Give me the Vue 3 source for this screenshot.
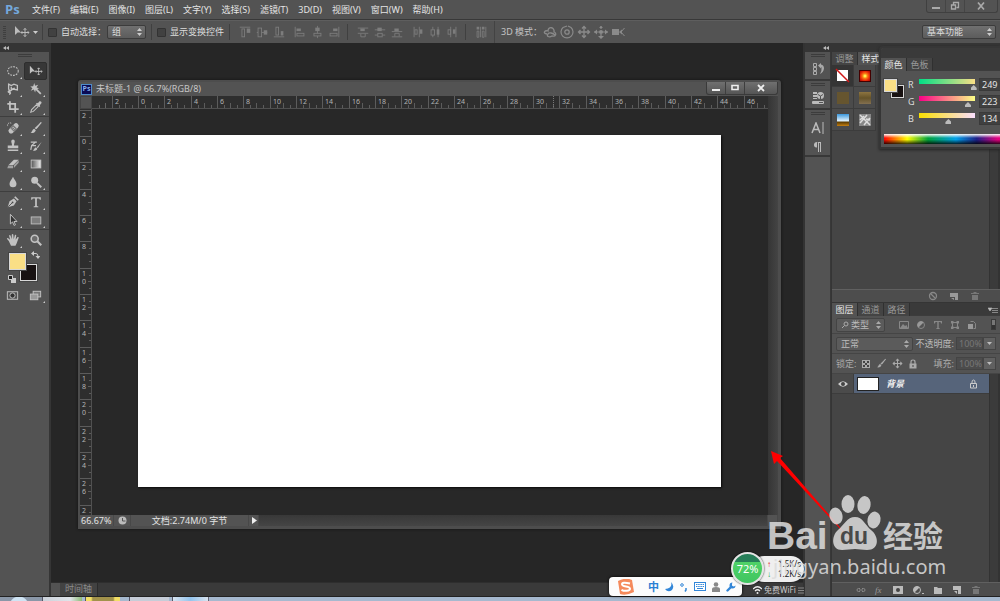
<script setup>
import { ref } from 'vue'

const menus = ['文件(F)', '编辑(E)', '图像(I)', '图层(L)', '文字(Y)', '选择(S)', '滤镜(T)', '3D(D)', '视图(V)', '窗口(W)', '帮助(H)']

const icons = {
  move: '<path d="M1 2v9l2.600-2.400H7z" fill="currentColor"/><path d="M11 4.500v8M7 8.500h8M9.700 5.800L11 4.400l1.300 1.400M9.700 11.200L11 12.600l1.300-1.400M8.300 7.200L7 8.500l1.300 1.300M13.700 7.200L15 8.500l-1.300 1.300" fill="none" stroke="currentColor"/>',
  ellipse: '<ellipse cx="8" cy="8" rx="6" ry="5" fill="none" stroke="currentColor" stroke-width="1.200" stroke-dasharray="2 1.200"/>',
  lasso: '<path d="M3 2.500l3 1.500 3-1.500 4 1.500v5L8 8 4.500 10.500 3 8zM4.500 10.500C2 10 2 12 4 12s1 2-.5 2M6 5.500v3l4-1.500" fill="none" stroke="currentColor" stroke-width="1.500"/>',
  wand: '<path d="M7 7l6.500 6.500" stroke="currentColor" stroke-width="2"/><path d="M6 1l1 3.200L10.500 3 8.600 6l2.900 1.800-3.500.2L7 12 5.500 8.700 2 10l1.900-3L1.500 5l3.300-.2z" fill="currentColor"/>',
  crop: '<path d="M4.500 1.500v9h10M1.500 4.500h9v10" fill="none" stroke="currentColor" stroke-width="2"/>',
  dropper: '<path d="M2 14l1-3 5.500-5.500 2 2L5 13z" fill="none" stroke="currentColor" stroke-width="1.200"/><path d="M8 4l1.200-1 1 .6 1.500-1.800c1.500-1.200 3.500.5 2.300 2.200L12.300 6l.5 1-1 1z" fill="currentColor"/>',
  heal: '<g transform="rotate(-45 9 8)"><rect x="1.500" y="5" width="14" height="6" rx="3" fill="currentColor"/><rect x="6" y="5" width="5" height="6" fill="#777"/><path d="M7.500 7h2M7.500 9h2" stroke="#ddd"/></g><path d="M6 2.500C3 1 1 3.500 2 6.500" fill="none" stroke="currentColor" stroke-dasharray="1.500 1"/>',
  brush: '<path d="M14.500 1L8 9.500 6.500 8z" fill="currentColor"/><path d="M14 1.500L8 8.800" stroke="currentColor" stroke-width="1.500"/><path d="M6 8.800l1.800 1.700C7 13.500 4 14 1.500 13.500 4 12.500 3.500 9.500 6 8.800z" fill="currentColor"/>',
  stamp: '<path d="M6 2.500a2 2 0 0 1 4 0c0 2-1 2.500-.8 5H14v3H2v-3h4.800c.2-2.500-.8-3-.8-5zM2 12h12v1.800H2z" fill="currentColor"/>',
  history: '<path d="M14.500 3L9 9.500l1 1zM8 9.500l1.500 1.500c-.5 2-3 2.800-5 2.300 1.500-1 1.500-3 3.500-3.800z" fill="currentColor"/><path d="M2 3.500h7M3 7.500h5M8 3L3 7.500l-1 5" fill="none" stroke="currentColor" stroke-width="1.400"/>',
  eraser: '<path d="M9 3h5.500L8.500 9H3z" fill="currentColor"/><path d="M2.500 9.800H8v3H1.500zM9 9.500l5.500-5.800v3L9 12.500z" fill="currentColor" opacity=".7"/>',
  gradient: '<defs><linearGradient id="toolGrad"><stop stop-color="#555"/><stop offset="1" stop-color="#eee"/></linearGradient></defs><rect x="2.500" y="3.500" width="11" height="9" fill="url(#toolGrad)" stroke="currentColor"/>',
  drop: '<path d="M8 2c1 3 4 5 4 8a4 4 0 0 1-8 0c0-3 3-5 4-8z" fill="currentColor"/>',
  dodge: '<circle cx="6.500" cy="6" r="4" fill="currentColor"/><path d="M9 9l5 5" stroke="currentColor" stroke-width="2.200"/>',
  pen: '<path d="M2 14l2-7 5-3 3 3-3 5z" fill="currentColor"/><path d="M10 2l4 4" stroke="currentColor" stroke-width="2"/><path d="M2.500 13.500L7 9" stroke="#484848"/><circle cx="7.500" cy="8.500" r="1" fill="#484848"/>',
  type: '<path d="M2.500 2.500h11v3h-1l-.8-1.500H9v8.500l1.700.5v1H5.300v-1L7 12.500V4H4.300l-.8 1.500h-1z" fill="currentColor"/>',
  path: '<path d="M5 1.500v11l2.500-2.300 1.700 4 1.600-.7-1.700-3.800h3.400z" fill="#333" stroke="currentColor" stroke-width="1.100"/>',
  rect: '<rect x="2.500" y="4.500" width="11" height="8" fill="#7d7d7d" stroke="currentColor"/>',
  hand: '<path d="M3.200 9L1 6.500c.5-1 1.500-.8 2.200 0l1.500 1.300L3.500 3c.2-1.200 1.500-1 1.800 0l1.200 4L6.600 2c.3-1 1.600-1 1.800 0l.4 5 1.300-4.500c.5-1 1.600-.6 1.600.4L11 7.700l2-2.800c.8-.7 1.800 0 1.300 1l-2.200 6-1.300 2.600H5.700z" fill="currentColor"/>',
  zoom: '<circle cx="6.500" cy="6.500" r="4" fill="#6c6c6c" stroke="currentColor" stroke-width="1.800"/><path d="M9.500 9.500l4.500 4.500" stroke="currentColor" stroke-width="2.400"/>',
  mask: '<rect x="2.500" y="4" width="11" height="8" fill="none" stroke="currentColor"/><circle cx="8" cy="8" r="2.800" fill="#333" stroke="currentColor"/>',
  screen: '<rect x="5.500" y="3.500" width="8" height="6" fill="#777" stroke="currentColor"/><rect x="2.500" y="6.500" width="8" height="6" fill="#999" stroke="currentColor"/>',
  alT: '<path d="M1 1.500h12" stroke="currentColor"/><rect x="3.500" y="3.500" width="3" height="9" fill="none" stroke="currentColor"/><path d="M9 3h4v5H9z" fill="currentColor"/>',
  alM: '<path d="M1 7.500h12" stroke="currentColor"/><rect x="2.500" y="2.500" width="4" height="10" fill="#535353" stroke="currentColor"/><path d="M9 5h4v5H9z" fill="currentColor"/>',
  alB: '<path d="M1 12.500h12" stroke="currentColor"/><rect x="3.500" y="1.500" width="3" height="9" fill="none" stroke="currentColor"/><path d="M9 6h3v5H9z" fill="currentColor"/>',
  alL: '<path d="M1.500 1v12" stroke="currentColor"/><path d="M3 3h5v3H3z" fill="currentColor"/><rect x="3.500" y="8.500" width="8" height="3" fill="none" stroke="currentColor"/>',
  alC: '<path d="M7.500 0v14" stroke="currentColor"/><path d="M5 2h5v4H5z" fill="currentColor"/><rect x="3.500" y="8.500" width="8" height="3" fill="#535353" stroke="currentColor"/>',
  alR: '<path d="M12.500 1v12" stroke="currentColor"/><path d="M6 3h5v3H6z" fill="currentColor"/><rect x="2.500" y="8.500" width="8" height="3" fill="none" stroke="currentColor"/>',
  dsT: '<path d="M1 2.500h12M1 8.500h12" stroke="currentColor"/><path d="M4 3h5v3H4z" fill="currentColor"/><path d="M4.500 9v3.500h5V9" fill="none" stroke="currentColor"/>',
  dsM: '<path d="M1 4.500h12M1 10.500h12" stroke="currentColor"/><path d="M4 2h5v4H4z" fill="currentColor"/><rect x="4.500" y="8.500" width="5" height="4" fill="#535353" stroke="currentColor"/>',
  dsB: '<path d="M1 6.500h12M1 12.500h12" stroke="currentColor"/><path d="M4 3h5v3H4z" fill="currentColor"/><path d="M4.500 12V8.500h5V12" fill="none" stroke="currentColor"/>',
  dsL: '<path d="M2.500 1v12M8.500 1v12" stroke="currentColor"/><rect x="3.500" y="4.500" width="2.500" height="5" fill="none" stroke="currentColor"/><path d="M9 4h3v5H9z" fill="currentColor"/>',
  dsC: '<path d="M4.500 1v12M10.500 1v12" stroke="currentColor"/><rect x="2.500" y="4.500" width="4" height="6" fill="#535353" stroke="currentColor"/><path d="M9 4h3v6H9z" fill="currentColor"/>',
  dsR: '<path d="M5.500 1v12M11.500 1v12" stroke="currentColor"/><rect x="2.500" y="4.500" width="3" height="5" fill="none" stroke="currentColor"/><path d="M8 4h3v5H8z" fill="currentColor"/>',
  auto: '<path d="M2 1h3v3H2zM8 1h3v3H8z" fill="currentColor"/><path d="M2.500 6v7h2V6zM8.500 6v7h2V6zM6.500 1v12M12.500 1v12" fill="none" stroke="currentColor"/>',
  orbit: '<path d="M4 9C-1 8 2 5 5 6c0-5 7-4 6 1 3 1 2 5-2 4-3 2-6 0-4-2 1-2 5-1 7 1" fill="none" stroke="currentColor" stroke-width="1.300"/>',
  roll: '<circle cx="7" cy="7" r="2.200" fill="none" stroke="currentColor" stroke-width="1.300"/><path d="M3 2.500A6 6 0 1 0 11 2.500L8 1M3 2.500L7 1" fill="none" stroke="currentColor" stroke-width="1.200"/>',
  pan: '<path d="M7 1.500v11M1.500 7h11M5 3.500l2-2 2 2M5 10.500l2 2 2-2M3.500 5l-2 2 2 2M10.500 5l2 2-2 2" fill="none" stroke="currentColor" stroke-width="1.300"/>',
  slide: '<circle cx="7" cy="7" r="2" fill="currentColor"/><path d="M7 1v3M0 7h14M7 9v4" stroke="currentColor" stroke-width="1.200"/><path d="M5 3l2-2 2 2zM4 11l3 3 3-3zM3 4.500v5L0 7zM11 4.500v5L14 7z" fill="currentColor"/>',
  camera: '<path d="M1 4h7v6H1zM8 7l3-2.500v5z" fill="currentColor"/><path d="M13.500 3L10 7l3.500 4" fill="none" stroke="currentColor"/>'
}

const toolGroups = [
  [['ellipse', '椭圆选框'], ['move', '移动'], ['lasso', '套索'], ['wand', '魔棒'], ['crop', '裁剪'], ['dropper', '吸管']],
  [['heal', '修复画笔'], ['brush', '画笔'], ['stamp', '仿制图章'], ['history', '历史记录画笔'], ['eraser', '橡皮擦'], ['gradient', '渐变'], ['drop', '模糊'], ['dodge', '减淡']],
  [['pen', '钢笔'], ['type', '文字'], ['path', '路径选择'], ['rect', '矩形']],
  [['hand', '抓手'], ['zoom', '缩放']]
]
const activeTool = ref('move')

const alignGroups = [
  [['alT', 'alM', 'alB'], ['alL', 'alC', 'alR']],
  [['dsT', 'dsM', 'dsB'], ['dsL', 'dsC', 'dsR']],
  [['auto']]
]
const modes3d = ['orbit', 'roll', 'pan', 'slide', 'camera']

// distance in pixels between two numbered ruler marks
const pitch = 26.33
const hMarks = Array.from({ length: 25 }, (_, i) => ({ x: Math.round(46 + (i - 1) * pitch), label: Math.abs((i - 1) * 2) }))
const vMarks = Array.from({ length: 16 }, (_, i) => ({ y: Math.round(27 + (i - 1) * pitch), label: String(Math.abs((i - 1) * 2)).split('') }))

const channels = ref([
  { name: 'R', value: 249, cls: 'r' },
  { name: 'G', value: 223, cls: 'g' },
  { name: 'B', value: 134, cls: 'b' }
])
</script>

<template>
  <div class="app">
    <header class="menubar">
      <span class="logo">Ps</span>
      <nav><a v-for="m in menus" :key="m" href="#">{{ m }}</a></nav>
      <div class="winbtns">
        <button aria-label="最小化"><svg width="10" height="10"><path d="M1 6h8v2H1z" fill="#aaa" /></svg></button>
        <button aria-label="还原"><svg width="10" height="10" fill="none" stroke="#aaa" stroke-width="1.300"><path d="M1.500 4h4v4h-4zM3.500 3.500v-2h5v5h-2" /></svg></button>
        <button class="wide" aria-label="关闭"><svg width="10" height="10"><path d="M2 1.500l6 7M8 1.500l-6 7" stroke="#aaa" stroke-width="1.700" /></svg></button>
      </div>
    </header>

    <div class="options">
      <i class="dots"></i>
      <svg class="mv" width="16" height="16" v-html="icons.move" />
      <svg class="car" width="5" height="3"><path d="M0 0h5L2.500 3z" fill="#ccc" /></svg>
      <i class="sep"></i>
      <label class="chk"><input type="checkbox">自动选择：</label>
      <div class="sel group"><select aria-label="自动选择"><option>组</option></select><svg width="5" height="8"><path d="M0 3l2.500-3L5 3zM0 5h5L2.500 8z" fill="#ccc" /></svg></div>
      <i class="sep"></i>
      <label class="chk second"><input type="checkbox">显示变换控件</label>
      <template v-for="(g, gi) in alignGroups" :key="gi">
        <i class="sep"></i>
        <div class="aligns">
          <div v-for="(s, si) in g" :key="si" class="set">
            <svg v-for="n in s" :key="n" width="14" height="14" viewBox="-1 -1 16 16" v-html="icons[n]" />
          </div>
        </div>
      </template>
      <i class="sep light"></i>
      <span class="mode">3D 模式：</span>
      <div class="set modes"><svg v-for="n in modes3d" :key="n" width="14" height="14" v-html="icons[n]" /></div>
      <div class="sel workspace-sel"><select aria-label="工作区"><option>基本功能</option></select><svg width="5" height="8"><path d="M0 3l2.500-3L5 3zM0 5h5L2.500 8z" fill="#ccc" /></svg></div>
    </div>

    <main class="work">
      <aside class="tools">
        <div class="strip"><svg width="6" height="4"><path d="M0 2l3-2v4zM3 2l3-2v4z" fill="#bbb" /></svg></div>
        <i class="grip"></i>
        <div v-for="(g, gi) in toolGroups" :key="gi" class="tgroup" :class="{ first: gi === 0, plain: gi === 3 }">
          <button v-for="[n, t] in g" :key="n" :aria-label="t" :class="{ on: activeTool === n, more: n !== 'zoom' && n !== 'move' }" @click="activeTool = n">
            <svg width="14" height="14" viewBox="0 0 16 16" v-html="icons[n]" />
          </button>
        </div>
        <div class="swatches">
          <span class="bg"></span><span class="fg"></span>
          <svg class="swap" width="9" height="8"><path d="M2 2.500h3q2 0 2 3" fill="none" stroke="#ccc" /><path d="M3 0v5L0 2.500zM4.500 5h5L7 8z" fill="#ccc" /></svg>
          <svg class="reset" width="8" height="8"><path d="M3 3h5v5H3z" fill="#ccc" /><path d="M.5.500h4v4h-4z" fill="#222" stroke="#ccc" /></svg>
        </div>
        <div class="tgroup plain">
          <button aria-label="快速蒙版"><svg width="15" height="15" viewBox="0 0 16 16" v-html="icons.mask" /></button>
          <button aria-label="屏幕模式" class="more"><svg width="15" height="15" viewBox="0 0 16 16" v-html="icons.screen" /></button>
        </div>
      </aside>

      <section class="center">
        <div class="stage">
          <article class="doc">
            <header class="dochead">
              <span class="pslogo">Ps</span>
              <h1>未标题-1 @ 66.7%(RGB/8)</h1>
              <div class="docbtns">
                <button aria-label="最小化文档"><svg width="10" height="8"><path d="M1 5h8v2H1z" fill="#eee" /></svg></button>
                <button aria-label="最大化文档"><svg width="10" height="8"><path d="M2 1.500h6v4H2z" fill="none" stroke="#eee" stroke-width="1.600" /></svg></button>
                <button class="wide" aria-label="关闭文档"><svg width="10" height="8"><path d="M2 1l6 6M8 1L2 7" stroke="#eee" stroke-width="1.800" /></svg></button>
              </div>
            </header>
            <div class="docbody">
              <div class="corner"></div>
              <div class="hruler">
                <svg width="100%" height="13">
                  <path d="M7.500 9v3M13.500 7v5" stroke="#666" />
                  <g v-for="m in hMarks" :key="m.x">
                    <path :d="`M${m.x + 0.5} 0v12M${m.x + 7.5} 9v3M${m.x + 13.5} 7v5M${m.x + 20.5} 9v3`" stroke="#5c5c5c" />
                    <text :x="m.x + 3" y="8">{{ m.label }}</text>
                  </g>
                  <path d="M461.500 0v12" stroke="#777" stroke-dasharray="1 1" />
                </svg>
              </div>
              <div class="vruler">
                <svg width="12" height="100%">
                  <g v-for="m in vMarks" :key="m.y">
                    <path :d="`M0 ${m.y + 0.5}h12M9 ${m.y + 7.5}h3M8 ${m.y + 13.5}h4M9 ${m.y + 20.5}h3`" stroke="#5c5c5c" />
                    <text v-for="(c, ci) in m.label" :key="ci" x="2" :y="m.y + 8 + ci * 8">{{ c }}</text>
                  </g>
                </svg>
              </div>
              <div class="canvaswrap"><div class="canvas"></div></div>
              <div class="vscroll"></div>
            </div>
            <footer class="docfoot">
              <span class="pct">66.67%</span>
              <span class="clock"><svg width="9" height="9"><circle cx="4.500" cy="4.500" r="4" fill="#bbb" /><path d="M4.500 2v3h3" stroke="#555" fill="none" /></svg></span>
              <span class="info">文档:2.74M/0 字节</span>
              <button class="play" aria-label="状态菜单"><svg width="6" height="7"><path d="M1 0v7l5-3.500z" fill="#eee" /></svg></button>
              <span class="rest"></span>
              <span class="size"></span>
            </footer>
          </article>
        </div>
        <div class="timeline"><i></i><span>时间轴</span></div>
      </section>

      <section class="right">
        <div class="strip rs">
          <svg width="6" height="4"><path d="M0 2l3-2v4zM3 2l3-2v4z" fill="#bbb" /></svg>
          <svg width="6" height="4"><path d="M0 0l3 2-3 2zM3 0l3 2-3 2z" fill="#bbb" /></svg>
        </div>
        <div class="rcols">
          <aside class="dock">
            <div class="dg"><i class="grip"></i>
              <svg width="14" height="14"><path d="M2.500 1.500h3v3h-3zM2.500 5.500h3v3h-3zM2.500 9.500h3v3h-3z" fill="none" stroke="#aaa" /><path d="M7 3.500L10 1v1.500q3 .5 3 4Q12.500 10 9 12q2-3 1.500-6.500L10 5v1.500z" fill="#aaa" /></svg>
            </div>
            <div class="dg"><i class="grip"></i>
              <svg width="14" height="14"><path d="M2 1h4v2H2zM2 4h4v2H2zM2 7h4v1H2z" fill="#bbb" /><circle cx="9.500" cy="4.500" r="3.500" fill="#bbb" /><path d="M7 3.500l2.500 1.500L12 3.500M9.500 5v3" stroke="#535353" fill="none" /><path d="M1.500 10.500h11v2h-11z" fill="none" stroke="#bbb" /><path d="M2 10h6v3H2z" fill="#bbb" /></svg>
            </div>
            <div class="dg tall"><i class="grip"></i>
              <svg width="14" height="12"><path d="M1 11L5 1l4 10M2.500 7.500h5" fill="none" stroke="#bbb" stroke-width="1.500" /><path d="M12 0v12" stroke="#bbb" /></svg>
              <svg width="12" height="12"><path d="M5 1.500v5C1 7 1 1 5 1h4v10H8V2H7v9H6V1z" fill="#bbb" /></svg>
            </div>
          </aside>

          <div class="panels">
            <section class="styles">
              <div class="tabs"><button>调整</button><button class="on">样式</button></div>
              <div class="styrow">
                <div class="cells">
                  <span class="on"><svg width="15" height="15"><path d="M2 2h11v11H2z" fill="#fff" /><path d="M1 1l13 13" stroke="#d01818" stroke-width="1.500" /></svg></span>
                  <span><i class="s1"></i></span>
                  <span><i class="s2"></i></span>
                  <span><i class="s3"></i></span>
                  <span><i class="s4"></i></span>
                  <span><svg width="12" height="12"><path d="M0 0h12v12H0z" fill="#888" /><path d="M1 1l10 10M1 6l4-4M5 11l6-7M8 1L1 9M7 5l4 1" stroke="#ddd" stroke-width="1.500" /></svg></span>
                </div>
                <i class="sb"></i>
              </div>
              <div class="pfoot">
                <svg width="10" height="10"><circle cx="5" cy="5" r="3.500" fill="none" stroke="#888" stroke-width="1.300" /><path d="M2.500 2.500l5 5" stroke="#888" stroke-width="1.300" /></svg>
                <svg width="10" height="10"><path d="M1 2h8v7H6V6H1z" fill="#999" /><path d="M2 7h3v2z" fill="#999" /></svg>
                <svg width="10" height="10"><path d="M1 2h8v1H1zM3.500 1h3v1h-3zM2 4h6v5H2z" fill="#777" /></svg>
              </div>
            </section>

            <section class="layers">
              <div class="tabs"><button class="on">图层</button><button>通道</button><button>路径</button>
                <svg width="10" height="6"><path d="M0 1h4L2 4zM4 1.500h6M4 3.500h6M4 5.500h6" fill="#bbb" stroke="#bbb" stroke-width=".6" /></svg>
              </div>
              <div class="row filter">
                <div class="sel kind"><svg class="mag" width="8" height="8"><circle cx="5" cy="3" r="2" fill="none" stroke="#aaa" /><path d="M3.500 4.500L1 7" stroke="#aaa" /></svg><select aria-label="过滤类型"><option>类型</option></select><svg width="5" height="8"><path d="M0 3l2.500-3L5 3zM0 5h5L2.500 8z" fill="#aaa" /></svg></div>
                <svg width="10" height="10"><path d="M.5 1.500h9v7h-9z" fill="none" stroke="#888" /><path d="M1 8l3-4 2 2 1.500-1L9 8z" fill="#888" /></svg>
                <svg width="10" height="10"><circle cx="5" cy="5" r="3.500" fill="none" stroke="#888" /><path d="M2.500 7.500a3.500 3.500 0 0 1 5-5z" fill="#999" /></svg>
                <svg width="10" height="10"><path d="M1 1h8v2.500H8L7.500 2H5.700v6l1 .3V9H3.300v-.7l1-.3V2H2.500L2 3.500H1z" fill="#888" /></svg>
                <svg width="10" height="10"><path d="M2.500 2.500h5v5h-5z" fill="none" stroke="#888" /><path d="M1 1h2.500v2.500H1zM6.500 1H9v2.500H6.500zM1 6.500h2.500V9H1zM6.500 6.500H9V9H6.500z" fill="#888" /></svg>
                <svg width="10" height="10"><path d="M3.500 1.500h3l2 2v5h-2" fill="none" stroke="#888" /><path d="M1 4h5v5H1z" fill="#999" /></svg>
                <i class="switch"></i>
              </div>
              <div class="row">
                <div class="sel blend"><select aria-label="混合模式"><option>正常</option></select><svg width="5" height="8"><path d="M0 3l2.500-3L5 3zM0 5h5L2.500 8z" fill="#aaa" /></svg></div>
                <label class="num">不透明度:<input value="100%" disabled></label><button class="drop" aria-label="不透明度滑块"><svg width="5" height="3"><path d="M0 0h5L2.500 3z" fill="#bbb" /></svg></button>
              </div>
              <div class="row lock">
                <span>锁定:</span>
                <svg width="10" height="10"><path d="M1 1h8v8H1z" fill="#aaa" /><path d="M2 2h2v2H2zM6 2h2v2H6zM4 4h2v2H4zM2 6h2v2H2zM6 6h2v2H6z" fill="#444" /></svg>
                <svg width="11" height="11" viewBox="0 0 16 16" v-html="icons.brush" />
                <svg width="11" height="11" viewBox="0 0 14 14" v-html="icons.pan" />
                <svg width="10" height="10"><path d="M1.500 4.500h7v5h-7z" fill="#aaa" /><path d="M3 5V3q0-2 2-2t2 2v2" fill="none" stroke="#aaa" stroke-width="1.200" /><path d="M5 6v2" stroke="#444" /></svg>
                <label class="num">填充:<input value="100%" disabled></label><button class="drop" aria-label="填充滑块"><svg width="5" height="3"><path d="M0 0h5L2.500 3z" fill="#bbb" /></svg></button>
              </div>
              <div class="list">
                <div class="items">
                  <div class="layer">
                    <span class="eye"><svg width="10" height="8"><path d="M0 4q5-5.500 10 0-5 5.500-10 0z" fill="#ccc" /><circle cx="5" cy="4" r="2" fill="#444" /></svg></span>
                    <span class="thumb"></span><em>背景</em>
                    <svg width="9" height="10"><path d="M1.500 4.500h6v4.500h-6z" fill="none" stroke="#ccc" /><path d="M3 4V3q0-2 1.500-2T6 3v1M4.500 6v2" fill="none" stroke="#ccc" /></svg>
                  </div>
                </div>
                <i class="sb"></i>
              </div>
              <div class="pfoot lf">
                <svg width="10" height="10"><path d="M4 3.500H2.500a1.500 1.500 0 0 0 0 3H4M6 3.500h1.500a1.500 1.500 0 0 1 0 3H6M3 5h4" fill="none" stroke="#888" /></svg>
                <span class="fx">fx</span>
                <svg width="10" height="10"><path d="M0 1h10v8H0z" fill="#bbb" /><circle cx="5" cy="5" r="2" fill="#444" /></svg>
                <svg width="12" height="10"><circle cx="5" cy="5" r="3.500" fill="none" stroke="#bbb" /><path d="M2.500 7.500a3.500 3.500 0 0 1 5-5z" fill="#bbb" /><path d="M10 8h2v1h-2z" fill="#bbb" /></svg>
                <svg width="10" height="10"><path d="M1 2h3l1 1h4v6H1z" fill="#bbb" /></svg>
                <svg width="10" height="10"><path d="M1 1h8v8H6V5H1z" fill="#bbb" /><path d="M2 6h3v3z" fill="#bbb" /></svg>
                <svg width="10" height="10"><path d="M1 2h8v1H1zM3.500 1h3v1h-3zM2 4h6v5H2z" fill="#777" /></svg>
              </div>
            </section>
          </div>
        </div>
      </section>
    </main>

    <div class="taskbar"><i class="orb"></i><i class="tb"></i><i class="tb yellow"></i><i class="tb later"></i><i class="tb blue"></i></div>

    <section class="colorpanel">
      <div class="cphead"></div>
      <div class="tabs"><button class="on">颜色</button><button>色板</button></div>
      <div class="cpbody">
        <div class="cpsw"><span class="bg"></span><span class="fg"></span></div>
        <div class="chs">
          <div v-for="c in channels" :key="c.name" class="ch">
            <label :for="'ch' + c.name">{{ c.name }}</label>
            <input :id="'ch' + c.name" v-model="c.value" type="range" min="0" max="255" :class="c.cls">
            <input v-model="c.value" class="val" type="text" :aria-label="c.name + ' 值'">
          </div>
        </div>
      </div>
      <div class="spectrum"></div>
    </section>

    <svg class="arrow" width="90" height="100"><path d="M1 1l12 5-3 2 77 89L7 11l-3 3z" fill="#f00" /></svg>

    <div class="ime">
      <svg width="18" height="16"><path d="M1 2q8-4 14-1l2 12q-8 4-14 2z" fill="#f58a5c" /><path d="M13 4.500q-8-2-8 .8c0 3 8 1.500 8 4.500 0 2.500-6 2.500-8.500 1" fill="none" stroke="#fff" stroke-width="2" /></svg>
      <b>中</b>
      <svg width="9" height="10"><path d="M6 0q2 6-6 7 3 4 7 1 3-4-1-8z" fill="#3286d8" /></svg>
      <svg width="8" height="10"><circle cx="2" cy="3" r="1.300" fill="none" stroke="#3286d8" /><path d="M6 6v2l-1 1.500" stroke="#3286d8" stroke-width="1.500" fill="none" /></svg>
      <svg width="12" height="9"><rect x=".5" y=".5" width="11" height="8" fill="#fff" stroke="#3286d8" /><path d="M2 2.500h8M2 4.500h8" stroke="#3286d8" stroke-dasharray="1.500 .7" /><path d="M3 6.500h6" stroke="#3286d8" /></svg>
      <svg width="8" height="10"><circle cx="4" cy="2.500" r="2.300" fill="#888" /><path d="M0 10V7q0-2 4-2t4 2v3z" fill="#888" /></svg>
      <svg width="10" height="10"><path d="M1.500 8.500l4-4" stroke="#3286d8" stroke-width="2.400" stroke-linecap="round" /><path d="M6.500.5a3 3 0 1 0 3 3L8 4.500 6 4V2z" fill="#3286d8" /></svg>
    </div>
    <div class="net">
      <div class="pill"><span><i class="up">↑</i>1.5K/s</span><span><i class="down">↓</i>1.2K/s</span></div>
      <div class="ball">72%</div>
      <div class="wifi"><svg width="9" height="8"><path d="M0 3q4.500-4.500 9 0M2 5q2.500-2.500 5 0" fill="none" stroke="#eee" stroke-width="1.200" /><circle cx="4.500" cy="7" r="1" fill="#eee" /></svg>免费WiFi<svg width="6" height="7"><path d="M0 1h6M0 3.500h6M0 6h6" stroke="#888" /></svg></div>
    </div>
    <div class="mark">
      <svg width="184" height="92">
        <g fill="#dcdcdc" opacity=".86">
          <text class="bai" x="-2" y="59">Bai</text>
          <ellipse cx="67" cy="26" rx="6.500" ry="8.500" transform="rotate(-12 67 26)" />
          <ellipse cx="79" cy="14" rx="6.500" ry="9" />
          <ellipse cx="95" cy="15" rx="6.500" ry="9" transform="rotate(10 95 15)" />
          <ellipse cx="105" cy="30" rx="6.500" ry="8.500" transform="rotate(12 105 30)" />
          <path d="M86 27c8 0 10 8 16 13 8 6 9 20-4 20-5 0-8-1-12-1s-8 1-13 1c-11 0-11-14-4-20 6-5 9-13 17-13z" />
          <text class="cn" x="114" y="57">经验</text>
          <text class="url" x="4" y="84">jingyan.baidu.com</text>
        </g>
        <text class="du" x="71" y="54">du</text>
      </svg>
    </div>
  </div>
</template>

<style>
html, body { margin: 0; background: #262626; overflow: hidden; }
</style>

<style scoped>
.app { position: relative; height: 100vh; display: flex; flex-direction: column; background: #262626; color: #ddd; font: 9px/12px "Noto Sans", "Noto Sans CJK SC", sans-serif; overflow: hidden; }
* { box-sizing: border-box; }
button, select, input { font: inherit; color: inherit; margin: 0; padding: 0; border: 0; background: none; border-radius: 0; appearance: none; outline: 0; min-width: 0; }
button { display: flex; align-items: center; justify-content: center; }
svg { display: block; flex: none; }
.menubar { height: 20px; flex: none; display: flex; background: #535353; border-bottom: 1px solid #383838; }
.logo { width: 32px; padding-left: 5px; font: bold 13px/19px "Open Sans", sans-serif; color: #74a8dc; }
nav { display: flex; gap: 10px; flex: 1; }
nav a { color: #e4e4e4; text-decoration: none; line-height: 19px; white-space: nowrap; }
.winbtns { display: flex; height: 13px; margin-right: 2px; border: 1px solid #404040; border-top: 0; border-radius: 0 0 3px 3px; }
.winbtns button { width: 19px; border-right: 1px solid #454545; }
.winbtns .wide { width: 32px; border: 0; }
.options { height: 23px; flex: none; display: flex; align-items: center; background: #535353; border-top: 1px solid #5e5e5e; color: #ddd; white-space: nowrap; }
.dots { width: 3px; height: 13px; margin-left: 3px; background: repeating-linear-gradient(#3f3f3f 0 1px, transparent 1px 2px); }
.mv { margin-left: 8px; color: #bbb; }
.car { margin: 0 4px 0 3px; }
.sep { width: 1px; height: 16px; background: #404040; }
.sep.light { height: 22px; background: #434343; }
.chk { display: flex; align-items: center; margin-left: 5px; }
.chk input { width: 9px; height: 9px; margin-right: 4px; background: #414141; border: 1px solid #333; border-radius: 1px; }
.chk.second { margin-right: 5px; }
.sel { position: relative; height: 14px; border: 1px solid #3c3c3c; border-radius: 2px; background: linear-gradient(#707070, #5c5c5c); }
.sel select { width: 100%; height: 12px; padding: 0 4px; line-height: 12px; display: block; }
.sel option { color: #222; }
.sel svg { position: absolute; right: 3px; top: 2px; }
.group { width: 39px; margin: 0 5px 0 1px; }
.aligns { display: flex; gap: 7px; padding: 0 6px 0 8px; color: #7d7d7d; }
.set { display: flex; gap: 3px; }
.mode { margin-left: 6px; width: 42px; color: #c4c4c4; }
.modes { color: #8a8a8a; }
.workspace-sel { width: 74px; margin: 0 4px 0 auto; }
.work { flex: 1; min-height: 0; display: flex; }
.strip { height: 9px; flex: none; background: #353535; display: flex; align-items: center; padding-left: 3px; }
.tools { width: 51px; background: #535353; border-right: 2px solid #353535; flex: none; }
.grip { display: block; width: 14px; height: 3px; margin: 2px auto; background: repeating-linear-gradient(#3c3c3c 0 1px, transparent 1px 2px); }
.tools .grip { margin-bottom: 5px; }
.tgroup { display: grid; grid-template-columns: 23px 23px; grid-auto-rows: 18px; padding: 0 1px; margin-bottom: 1px; border-bottom: 1px solid #3e3e3e; color: #c2c2c2; }
.tgroup button { position: relative; border-radius: 2px; }
.tgroup .on { background: #373737; border: 1px solid #2e2e2e; }
.tgroup.first { margin-bottom: 2px; }
.tgroup.plain { border-color: transparent; }
.more::after { content: ""; position: absolute; right: 2px; bottom: 1px; border: 1px solid #ccc; border-top-color: transparent; border-left-color: transparent; }
.swatches { position: relative; height: 35px; }
.swatches span, .cpsw span { position: absolute; border: 1px solid #d8d8d8; outline: 1px solid #444; }
.fg { background: #fadf86; }
.bg { background: #181212; }
.swatches span { width: 17px; height: 17px; }
.swatches .fg { left: 9px; top: 2px; }
.swatches .bg { left: 20px; top: 13px; }
.swap { position: absolute; left: 31px; top: 0; }
.reset { position: absolute; left: 8px; top: 24px; }
.center { flex: 1; min-width: 0; display: flex; flex-direction: column; }
.stage { flex: 1; position: relative; }
.doc { position: absolute; left: 27px; right: 22px; top: 37px; bottom: 53px; display: flex; flex-direction: column; border: 2px solid #4d4d4d; border-bottom-width: 3px; border-right-width: 3px; border-radius: 3px 3px 0 0; background: #282828; box-shadow: 0 0 3px #111; }
.dochead { height: 14px; flex: none; display: flex; background: #535353; align-items: center; }
.pslogo { width: 11px; height: 11px; border: 1px solid #4f8cc9; background: #0b0b55; color: #8ab4ea; font: bold 7px/8px "Open Sans", sans-serif; text-align: center; margin: 0 4px 0 1px; }
h1 { font: inherit; margin: 0; flex: 1; color: #c6c6c6; }
.docbtns { display: flex; height: 13px; align-self: flex-start; background: linear-gradient(#707070, #555); border: 1px solid #3a3a3a; border-top: 0; border-radius: 0 0 3px 3px; }
.docbtns button { width: 19px; border-right: 1px solid #3e3e3e; }
.docbtns .wide { width: 32px; border: 0; }
.docbody { flex: 1; min-height: 0; display: grid; grid-template: 13px minmax(0, 1fr) / 12px minmax(0, 1fr) 10px; }
.corner { background: #535353; border: 1px solid #444; }
.hruler, .vruler { background: #2e2e2e; overflow: hidden; }
.hruler { border-bottom: 1px solid #505050; }
.vruler { grid-area: 2 / 1; border-right: 1px solid #505050; }
.hruler text, .vruler text { font: 7px "Noto Sans", sans-serif; fill: #b4b4b4; }
.vscroll { grid-area: 1 / 3 / 3; background: linear-gradient(90deg, #353535, #444); }
.canvaswrap { grid-area: 2 / 2; display: flex; padding: 26px 47px 28px 46px; }
.canvas { flex: 1; background: #fff; box-shadow: 1px 1px 2px #0a0a0a; }
.docfoot { height: 11px; flex: none; display: flex; background: #404040; color: #e4e4e4; line-height: 11px; }
.docfoot > * { border-right: 1px solid #484848; background: #535353; }
.pct { width: 34px; padding-left: 1px; }
.clock { width: 17px; padding: 1px 4px; }
.info { width: 118px; text-align: center; }
.play { width: 10px; }
.docfoot .rest { flex: 1; background: linear-gradient(#383838, #454545); }
.size { width: 10px; }
.timeline { height: 14px; flex: none; display: flex; background: #3a3a3a; border-top: 1px solid #2e2e2e; color: #8c8c8c; }
.timeline i { width: 9px; background: #535353; }
.timeline span { padding: 0 5px; border-right: 1px solid #2c2c2c; background: #424242; }
.right { width: 197px; flex: none; display: flex; flex-direction: column; background: #353535; border-left: 2px solid #333; }
.rs { justify-content: space-between; padding: 0 3px 0 18px; }
.rcols { flex: 1; min-height: 0; display: flex; }
.dock { width: 26px; background: #535353; border-right: 1px solid #383838; }
.dg { height: 29px; border-bottom: 2px solid #383838; display: flex; flex-direction: column; align-items: center; }
.dg .grip { margin: 2px 0 5px; }
.dg.tall { height: 47px; gap: 7px; }
.dg.tall .grip { margin-bottom: 0; }
.panels { flex: 1; min-width: 0; margin-left: 1px; display: flex; flex-direction: column; }
.tabs { height: 13px; flex: none; display: flex; background: #3a3a3a; border-bottom: 1px solid #3c3c3c; color: #999; }
.tabs button { width: 26px; border-right: 1px solid #303030; background: #444; height: 13px; }
.tabs .on { background: #535353; color: #e6e6e6; }
.tabs svg { margin: 4px 2px 0 auto; }
.styles { flex: 251 1 0; display: flex; flex-direction: column; min-height: 0; }
.styrow { flex: 1; display: flex; background: #454545; min-height: 0; }
.cells { flex: 1; display: grid; grid-template-columns: repeat(auto-fill, 22px); grid-auto-rows: 22px; align-content: start; max-width: 46px; }
.cells span { display: flex; align-items: center; justify-content: center; border: solid #3c3c3c; border-width: 0 1px 1px 0; background: #4b4b4b; }
.cells .on { background: #353535; }
.cells i { width: 12px; height: 12px; }
.s1 { background: radial-gradient(#fff04a 10%, #fa7b13 35%, #e92b08 65%, #a00); border: 1px solid #400; }
.s2 { background: #66552f; }
.s3 { background: linear-gradient(#8d7440, #655329 50%, #837050); }
.s4 { background: linear-gradient(#3b97dc, #e9f7ff 60%, #543700 65%, #c58012); }
.styrow .sb { margin-left: auto; }
.sb { width: 11px; background: #3b3b3b; border: solid #333; border-width: 0 2px 0 1px; }
.pfoot { height: 13px; flex: none; display: flex; justify-content: flex-end; align-items: center; gap: 11px; padding-right: 20px; background: #4d4d4d; border-top: 1px solid #606060; }
.layers { flex: 294 1 0; min-height: 0; display: flex; flex-direction: column; margin-top: 1px; }
.row { height: 20px; flex: none; display: flex; align-items: center; background: #535353; padding: 0 4px; border-bottom: 1px solid #454545; color: #bbb; white-space: nowrap; }
.filter { height: 18px; gap: 7px; }
.filter .sel { margin-right: 7px; }
.kind { width: 49px; }
.kind select { padding-left: 14px; }
.sel .mag { left: 4px; right: auto; }
.row .sel { background: #5b5b5b; border-color: #444; }
.switch { width: 5px; height: 11px; margin-left: auto; background: linear-gradient(#777 50%, #333 50%); border: 1px solid #3a3a3a; }
.blend { width: 77px; }
.num { display: flex; align-items: center; margin-left: auto; }
.num input { width: 27px; height: 13px; margin-left: 2px; padding-left: 2px; border: 1px solid #444; background: #4c4c4c; color: #777; }
.drop { width: 13px; height: 13px; margin-right: 4px; border: 1px solid #444; background: #606060; }
.row:not(.filter) { padding-right: 0; }
.lock { color: #aaa; gap: 5px; }
.lock .drop { margin-left: -5px; }
.list { flex: 1; min-height: 0; display: flex; background: #454545; }
.items { flex: 1; }
.layer { height: 20px; display: flex; align-items: center; background: #56647a; border-bottom: 1px solid #3c3c3c; padding-right: 11px; }
.eye { width: 22px; height: 19px; background: #4b4b4b; display: flex; align-items: center; justify-content: center; border-right: 1px solid #3d3d3d; }
.thumb { width: 22px; height: 14px; margin: 0 7px 0 3px; background: #fff; border: 1px solid #222; }
em { flex: 1; font-weight: bold; color: #eee; }
.lf { height: 14px; justify-content: flex-end; gap: 9px; padding-right: 19px; }
.fx { font: italic 9px/10px "Liberation Serif", serif; width: 9px; color: #999; }
.taskbar { height: 5px; flex: none; display: flex; background: #a6b9cf; border-top: 1px solid #222; }
.orb { width: 42px; background: radial-gradient(circle at 19px 9px, #cfe4f4 9px, #8a97a8 10px); }
.tb { width: 40px; margin-right: 3px; background: linear-gradient(90deg, #ccd2da, #dfe4ea 70%, #8dbb76); border-left: 1px solid #556; }
.yellow { width: 35px; margin-right: 9px; background: linear-gradient(90deg, #f3df66 15%, #a2924b 20% 80%, #f3df66 85%); }
.later { background: #c6cdd8; }
.blue { width: 37px; background: linear-gradient(90deg, #d9e4f0, #94c5ee 50%, #d9e4f0); border-right: 1px solid #667; }
.colorpanel { position: absolute; right: 0; top: 46px; width: 121px; border: 2px solid #363636; border-right: 0; border-radius: 4px 0 0 0; background: #535353; overflow: hidden; box-shadow: 0 1px 3px #222; }
.cphead { height: 10px; background: #3a3a3a; }
.cpbody { display: flex; padding: 5px 0 0 3px; }
.cpsw { position: relative; flex: none; width: 24px; height: 22px; margin-top: 3px; }
.cpsw span { width: 13px; height: 13px; }
.cpsw .bg { left: 7px; top: 6px; }
.chs { flex: 1; min-width: 0; }
.ch { height: 17px; display: flex; align-items: center; }
.ch label { flex: none; width: 8px; }
.ch input[type=range] { flex: none; width: 62px; height: 11px; background-size: 56px 5px; background-position: 3px 0; background-repeat: no-repeat; }
.ch input::-webkit-slider-thumb { appearance: none; width: 6px; height: 5px; margin-top: 6px; background: #bbb; clip-path: polygon(50% 0, 100% 60%, 100% 100%, 0 100%, 0 60%); }
.r { background-image: linear-gradient(90deg, #00df86, #fadf86); }
.g { background-image: linear-gradient(90deg, #f90086, #faff86); }
.b { background-image: linear-gradient(90deg, #f9df00, #fadfff); }
.ch .val { flex: 1; width: 0; height: 13px; margin-left: 1px; padding-left: 2px; background: #404040; border: 1px solid #3a3a3a; border-right: 0; color: #e4e4e4; }
.spectrum { height: 10px; margin: 7px 0 3px 3px; background: linear-gradient(#fff, transparent 40%, transparent 55%, #000c), linear-gradient(90deg, #f00, #ff0 20%, #00a23c 38%, #00a0e9 62%, #1d2088 80%, #e4007f 98%); }
.arrow { position: absolute; right: 140px; bottom: 51px; }
.ime { position: absolute; right: 258px; bottom: 5px; width: 133px; height: 19px; display: flex; align-items: center; gap: 6px; padding-left: 8px; background: #fcfcfc; border-radius: 4px; box-shadow: 0 0 3px #000; }
.ime b { margin-left: 7px; width: 11px; font-size: 11px; color: #2a80d4; }
.net { position: absolute; right: 196px; bottom: 5px; width: 73px; height: 44px; color: #222; }
.pill { position: absolute; left: 20px; top: 4px; right: 0; height: 26px; padding: 3px 0 0 16px; border-radius: 13px; background: #efefef; font: 8px/10px "Noto Sans", sans-serif; }
.pill span { display: flex; }
.pill i { width: 11px; font-style: normal; }
.up { color: #d22; }
.down { color: #2a5; }
.ball { position: absolute; left: 0; top: 0; width: 33px; height: 33px; border: 2px solid #e4e4e4; border-radius: 50%; background: linear-gradient(#277f59 26%, #4fd267 28%, #40c561); color: #fff; font-size: 11px; line-height: 29px; text-align: center; box-shadow: 0 0 2px #000; }
.wifi { position: absolute; left: 22px; bottom: 1px; display: flex; align-items: center; gap: 2px; height: 10px; color: #ccc; font-size: 8px; white-space: nowrap; }
.mark { position: absolute; right: 47px; bottom: 19px; width: 184px; height: 92px; }
.bai { font: bold 39px "Liberation Sans", sans-serif; }
.cn { font: bold 30px "Noto Sans CJK SC", sans-serif; }
.url { font: 20px "Noto Sans", sans-serif; }
.du { font: bold 23px "Liberation Sans", sans-serif; fill: #494949; }
</style>
